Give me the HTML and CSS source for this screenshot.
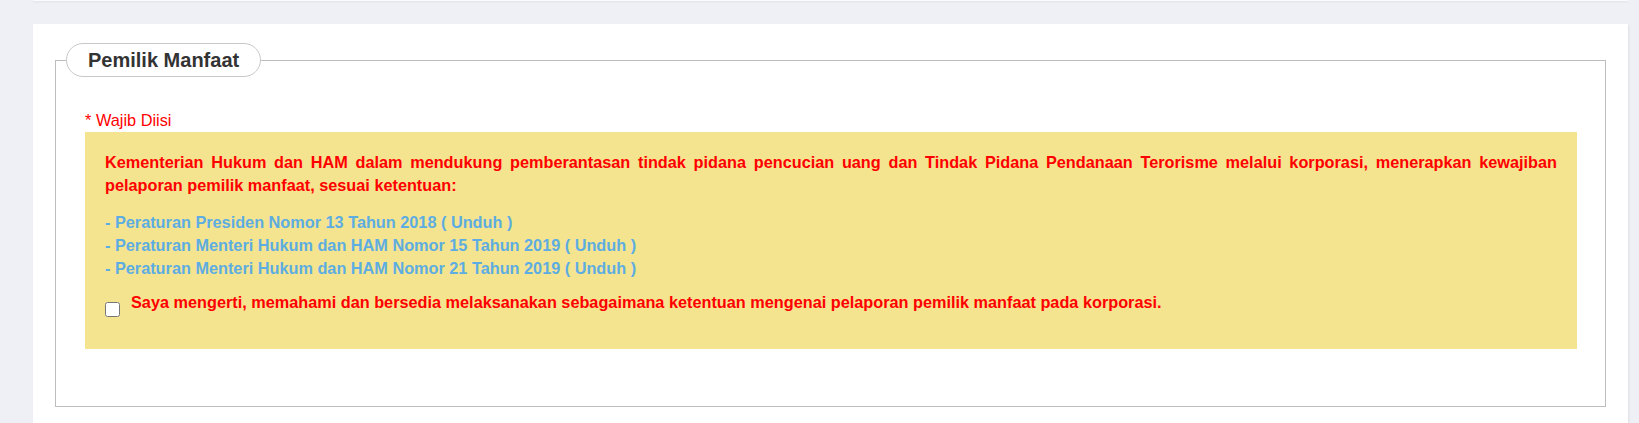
FILE: index.html
```html
<!DOCTYPE html>
<html lang="id">
<head>
<meta charset="utf-8">
<title>Pemilik Manfaat</title>
<link rel="stylesheet" href="styles.css">
</head>
<body>
<div class="prev-card"></div>
<div class="card">
  <fieldset class="group">
    <legend class="group-title">Pemilik Manfaat</legend>
    <div class="group-body">
      <div class="required-note">* Wajib Diisi</div>
      <div class="notice">
        <p class="notice-text">Kementerian Hukum dan HAM dalam mendukung pemberantasan tindak pidana pencucian uang dan Tindak Pidana Pendanaan Terorisme melalui korporasi, menerapkan kewajiban pelaporan pemilik manfaat, sesuai ketentuan:</p>
        <ul class="rules">
          <li>- Peraturan Presiden Nomor 13 Tahun 2018 ( <a href="#">Unduh</a> )</li>
          <li>- Peraturan Menteri Hukum dan HAM Nomor 15 Tahun 2019 ( <a href="#">Unduh</a> )</li>
          <li>- Peraturan Menteri Hukum dan HAM Nomor 21 Tahun 2019 ( <a href="#">Unduh</a> )</li>
        </ul>
        <label class="agree">
          <input type="checkbox" class="agree-box">
          <span class="agree-text">Saya mengerti, memahami dan bersedia melaksanakan sebagaimana ketentuan mengenai pelaporan pemilik manfaat pada korporasi.</span>
        </label>
      </div>
    </div>
  </fieldset>
</div>
</body>
</html>
```
FILE: styles.css
```css
html, body {
  margin: 0;
  padding: 0;
}
body {
  background: #eff0f6;
  font-family: "Liberation Sans", Arial, sans-serif;
  padding: 0 11px 0 33px;
  overflow: hidden;
}
.prev-card {
  height: 1px;
  background: #fbfbfd;
  box-shadow: 0 1px 2px rgba(0, 0, 0, 0.08);
}
.card {
  margin-top: 23px;
  background: #ffffff;
  box-shadow: 1px 1px 2px rgba(0, 0, 0, 0.07);
  padding: 19px 22px 40px 22px;
}
.group {
  margin: 0;
  padding: 0;
  border: 1px solid #bdbdbd;
  min-inline-size: 0;
}
.group-title {
  margin-left: 10px;
  padding: 0 21px;
  height: 32px;
  line-height: 32px;
  border: 1px solid #c8c8c8;
  border-radius: 17px;
  font-size: 20px;
  font-weight: bold;
  color: #333333;
  background: #fff;
}
.group-body {
  padding: 32px 28px 57px 29px;
}
.required-note {
  color: #ff0000;
  font-size: 16.33px;
  line-height: 22px;
  margin-bottom: 1px;
}
.notice {
  background: #f4e48f;
  padding: 19px 20px 32px 20px;
  font-size: 16.27px;
  line-height: 23.33px;
  font-weight: bold;
}
.notice-text {
  margin: 0;
  color: #ff0000;
  text-align: justify;
}
.rules {
  list-style: none;
  margin: 13px 0 0 0;
  padding: 0;
  color: #5dade2;
}
.rules a {
  color: #5dade2;
  text-decoration: none;
}
.agree {
  display: flex;
  align-items: flex-start;
  gap: 11px;
  margin-top: 10px;
}
.agree-box {
  width: 15px;
  height: 15px;
  margin: 11px 0 0 0;
  flex: none;
}
.agree-text {
  color: #ff0000;
}
```
